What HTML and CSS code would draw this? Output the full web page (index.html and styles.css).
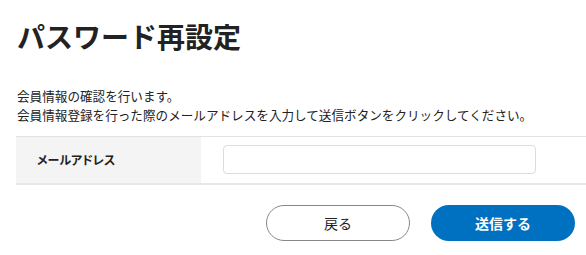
FILE: index.html
```html
<html>
<head>
    <meta charset="utf-8">
    <title>パスワード再設定</title>
    <link rel="stylesheet" href="styles.css">
</head>
<body>

    <form action="javascript:;" id="content">
        <h1 class="pageTitle">パスワード再設定</h1>
        <p class="lead">会員情報の確認を行います。<br>会員情報登録を行った際のメールアドレスを入力して送信ボタンをクリックしてください。</p>

        <table class="formTable" cellspacing="0" cellpadding="0">
            <tr>
                <th class="label">メールアドレス</th>
                <td class="field"><input type="text" id="email" class="text"/></td>
            </tr>
        </table>

        <div class="buttons">
            <a href="javascript:;" class="btn back">戻る</a>
            <a href="javascript:;" class="btn submit">送信する</a>
        </div>
    </form>

</body>
</html>
```

FILE: styles.css
```css
* {font-family: "Noto Sans CJK JP", "Noto Sans", sans-serif; box-sizing: border-box;}
body {margin: 0; background: #fff; color: #222;}
#content {padding-left: 16px; margin: 0;}
.pageTitle {
    font-size: 28px;
    font-weight: bold;
    line-height: 40px;
    margin: 16px 0 0 1px;
}
.lead {
    font-size: 12.6px;
    line-height: 19px;
    margin: 30px 0 0 1px;
}
.formTable {
    width: 100%;
    margin-top: 12px;
    border-collapse: collapse;
    border-top: 1px solid #e2e2e2;
    border-bottom: 2px solid #e8e8e8;
}
.formTable .label {
    background-color: #f4f4f4;
    font-feature-settings: "palt";
    font-size: 12px;
    font-weight: bold;
    height: 47px;
    padding: 0 0 0 21px;
    text-align: left;
    width: 185px;
}
.formTable .field {padding-left: 22px;}
#email {
    border: 1px solid #dcdcdc;
    border-radius: 4px;
    display: block;
    height: 29px;
    outline: none;
    width: 313px;
}
.buttons {
    display: flex;
    gap: 21px;
    justify-content: flex-end;
    margin-top: 20px;
    padding-right: 11px;
}
.btn {
    align-items: center;
    border-radius: 18px;
    display: flex;
    font-size: 14px;
    height: 36px;
    justify-content: center;
    text-decoration: none;
    width: 144px;
}
.btn.back {border: 1px solid #888; color: #222; background: #fff;}
.btn.submit {background: #0070c0; color: #fff; font-weight: bold;}
```
